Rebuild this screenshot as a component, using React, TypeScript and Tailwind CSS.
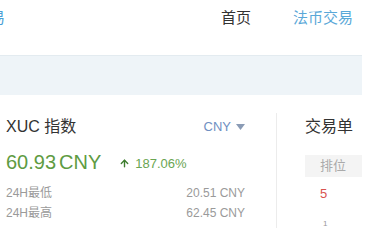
import { ArrowUp } from "lucide-react"

const font = { fontFamily: '"Liberation Sans", "Noto Sans CJK SC", sans-serif' }

function Header() {
  return (
    <div className="h-[55px] flex items-start pt-[7px] text-[15px]">
      <span className="-ml-[55px] text-[#4a9fd6]">法币交易</span>
      <div className="ml-auto flex gap-[42px] pr-[15px]">
        <span className="text-[#333]">首页</span>
        <span className="text-[#5aa8d8]">法币交易</span>
      </div>
    </div>
  )
}

function IndexPanel() {
  return (
    <div className="w-[276px] pl-[6px] pr-[31px] pt-[20px]">
      <div className="flex items-center justify-between">
        <span className="text-[16px] text-[#333]">XUC 指数</span>
        <span className="flex items-center gap-[5px] text-[13px] text-[#6f8fc2]">
          CNY
          <svg width="9" height="6" viewBox="0 0 9 6">
            <path d="M0 0h9L4.5 6z" fill="#8a9bb5" />
          </svg>
        </span>
      </div>
      <div className="flex items-baseline mt-[8px]">
        <span className="text-[20px] text-[#5e9b42]">60.93</span>
        <span className="text-[20px] text-[#5e9b42] ml-[3px]">CNY</span>
        <span className="flex items-center ml-[18px] text-[13px] text-[#6aa552]">
          <ArrowUp className="w-[11px] h-[11px] mr-[5px] text-[#3d7d2e]" strokeWidth={3} />
          187.06%
        </span>
      </div>
      <div className="mt-[6px] text-[12px] text-[#9a9a9a] leading-[20px]">
        <div className="flex justify-between">
          <span>24H最低</span>
          <span>20.51 CNY</span>
        </div>
        <div className="flex justify-between">
          <span>24H最高</span>
          <span>62.45 CNY</span>
        </div>
      </div>
    </div>
  )
}

function OrderPanel() {
  return (
    <div className="flex-1 border-l border-[#ececec] mt-[18px] pl-[28px] pr-[6px]">
      <div className="text-[16px] text-[#333] pt-[2px]">交易单</div>
      <div className="mt-[16px] h-[22px] bg-[#f4f4f4] text-[13px] text-[#aaa] flex items-center pl-[15px]">
        排位
      </div>
      <div className="mt-[9px] pl-[15px] text-[13px] text-[#d9534f] leading-[16px]">5</div>
      <div className="mt-[18px] pl-[18px] text-[8px] text-[#999] leading-[8px]">1</div>
    </div>
  )
}

export default function App() {
  return (
    <div className="w-[368px] h-[235px] overflow-hidden bg-white" style={font}>
      <Header />
      <div className="h-[40px] mr-[6px] bg-[#eef4f8] border-t border-[#e3ebf0]" />
      <div className="flex">
        <IndexPanel />
        <OrderPanel />
      </div>
    </div>
  )
}
